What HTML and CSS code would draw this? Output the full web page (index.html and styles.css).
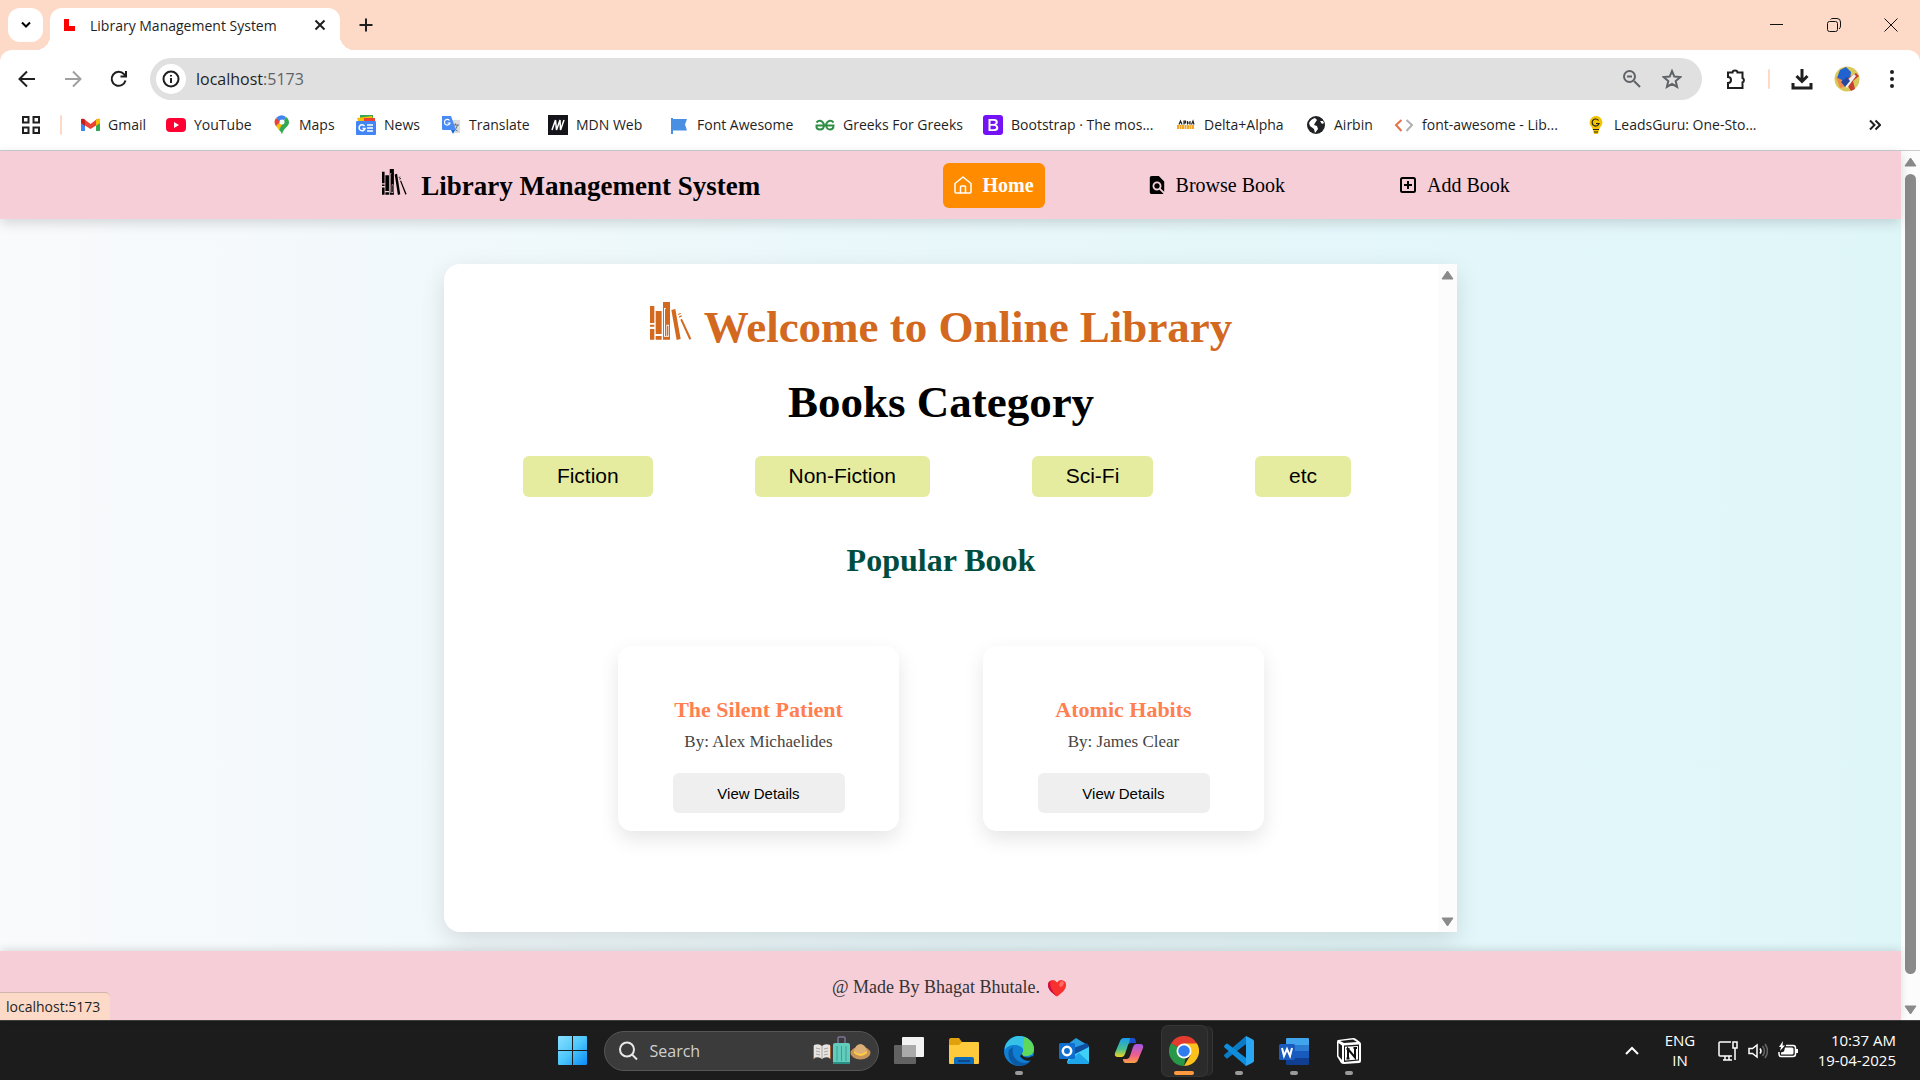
FILE: index.html
```html
<!DOCTYPE html>
<html lang="en">
<head>
<meta charset="utf-8">
<meta name="viewport" content="width=device-width, initial-scale=1">
<title>Library Management System</title>
<link rel="stylesheet" href="styles.css">
</head>
<body>
<svg class="defs" aria-hidden="true">
  <symbol id="books" viewBox="0 0 126 114">
    <path d="M0 12h13v51H0zM0 68h13v6H0zM0 81h13v32H0zM17 27h18v69H17zM17 102h18v11H17zM64 24l12-3 16 90-12 3zM84 36l8-3 1 2-8 4zM87 43l8-3 1 3-8 4zM91 53l5-3 28 60-6 3z"/>
    <path fill-rule="evenodd" d="M39 0h21v113H39zM42 18v86h15V68h-8v34h-4V20h3v-2zM51 71h4v30h-4z"/>
  </symbol>
</svg>

<header class="browser">
  <div class="tabstrip">
    <button class="tab-search" aria-label="Search tabs"><svg width="12" height="8" viewBox="0 0 12 8"><path d="M2 1.500l4 4 4-4" class="ln"/></svg></button>
    <div class="tab">
      <svg class="favicon" width="12" height="12" viewBox="0 0 12 12"><path d="M0 0h5v7h6v5H0z" fill="#f00"/></svg>
      <span class="tab-title">Library Management System</span>
      <button class="plain" aria-label="Close tab"><svg width="12" height="12" viewBox="0 0 12 12"><path d="M1.500 1.500l9 9M10.500 1.500l-9 9" class="ln"/></svg></button>
    </div>
    <button class="plain new-tab" aria-label="New tab"><svg width="14" height="14" viewBox="0 0 14 14"><path d="M7 .5v13M.5 7h13" class="ln"/></svg></button>
    <div class="window-controls">
      <button class="plain" aria-label="Minimize"><svg width="14" height="14" viewBox="0 0 14 14"><path d="M0 6.500h13" class="hair"/></svg></button>
      <button class="plain" aria-label="Restore"><svg width="14" height="14" viewBox="0 0 14 14"><rect x=".5" y="3.500" width="10" height="10" rx="2" class="hair"/><path d="M3.500 1.500Q4 .5 6 .5h4q3.500 0 3.500 3.500v4q0 2-1.500 3" class="hair"/></svg></button>
      <button class="plain" aria-label="Close window"><svg width="14" height="14" viewBox="0 0 14 14"><path d="M.5.5l13 13M13.500.5l-13 13" class="hair"/></svg></button>
    </div>
  </div>

  <div class="toolbar">
    <div class="nav-buttons">
      <button class="plain" aria-label="Back"><svg width="18" height="18" viewBox="0 0 18 18"><path d="M17 9H2M9 1.500L1.500 9 9 16.500" class="ln"/></svg></button>
      <button class="plain faded" aria-label="Forward"><svg width="18" height="18" viewBox="0 0 18 18"><path d="M1 9h15M9 1.500L16.500 9 9 16.500" class="ln"/></svg></button>
      <button class="plain" aria-label="Reload"><svg width="18" height="18" viewBox="0 0 18 18"><path d="M15.500 10.500A7 7 0 1 1 14 4.200l1.500 1.600M16 1v5.500h-5.500" class="ln"/></svg></button>
    </div>
    <div class="omnibox">
      <span class="site-info"><svg width="18" height="18" viewBox="0 0 18 18"><circle cx="9" cy="9" r="7.500" class="ln"/><path d="M9 8v5M9 5v1.500" class="ln"/></svg></span>
      <span class="address">localhost<span class="port">:5173</span></span>
      <svg class="muted" width="20" height="20" viewBox="0 0 20 20"><circle cx="7.500" cy="7.500" r="5.500" class="ln"/><path d="M12 12l6 6M5 7.500h5" class="ln"/></svg>
      <svg class="muted" width="20" height="20" viewBox="0 0 20 20"><path d="M10 2l2.300 5.600 6 .5-4.600 3.900 1.400 5.900L10 14.800l-5.100 3.100 1.400-5.900L1.700 8.100l6-.5z" class="ln"/></svg>
    </div>
    <div class="actions">
      <button class="plain" aria-label="Extensions"><svg width="22" height="22" viewBox="0 0 22 22"><path d="M3 4.500h4.500a2.500 2 0 0 1 5 0h5V10a2.500 2.500 0 0 1 0 4.500v5.500H3v-5a3 3 0 0 0 0-6z" class="ln"/></svg></button>
      <span class="divider"></span>
      <button class="plain" aria-label="Downloads"><svg width="22" height="22" viewBox="0 0 22 22"><path d="M11 1v12M5.500 8l5.500 5.500L16.500 8M2 15v5h18v-5" class="ln thick"/></svg></button>
      <button class="plain" aria-label="Profile"><svg width="26" height="26" viewBox="0 0 26 26"><circle cx="13" cy="13" r="12.500" fill="#d9c95c"/><path d="M6 4l6-3 5 5-1 8-8 4-5-6z" fill="#1f62d0"/><path d="M14 12l8-5 3 3-6 5 2 8-4 2-5-8z" fill="#c8402f"/><path d="M2 11l6 3 2 7-4 1z" fill="#f08a4b"/><path d="M9 18l11-10 2 2-9 12z" fill="#f4f1ee"/><path d="M7 16l6-5 3 4-5 6z" fill="#234a9e"/></svg></button>
      <button class="plain" aria-label="Menu"><svg width="6" height="18" viewBox="0 0 6 18"><g fill="#1f1f1f"><circle cx="3" cy="2" r="2"/><circle cx="3" cy="9" r="2"/><circle cx="3" cy="16" r="2"/></g></svg></button>
    </div>
  </div>

  <nav class="bookmarks" aria-label="Bookmarks">
    <button class="plain apps" aria-label="Apps"><svg width="18" height="18" viewBox="0 0 18 18"><path d="M1 1h5.500v5.500H1zM11.500 1H17v5.500h-5.500zM1 11.500h5.500V17H1zM11.500 11.500H17V17h-5.500z" class="ln"/></svg></button>
    <span class="divider"></span>
    <a href="#"><svg width="19" height="20" viewBox="0 0 19 20"><path d="M0 5v11h4V8z" fill="#4285f4"/><path d="M19 5v11h-4V8z" fill="#34a853"/><path d="M0 5q0-2 3-1l6.500 5L16 4q3-1 3 1v3l-9.500 6L0 8z" fill="#ea4335"/><path d="M15 5l1-1q3-1 3 1v3l-4 3z" fill="#fbbc04"/><path d="M0 5q0-2 3-1l1 1v6L0 8z" fill="#c5221f"/></svg>Gmail</a>
    <a href="#"><svg width="20" height="20" viewBox="0 0 20 20"><rect y="3" width="20" height="14" rx="4" fill="#ff0033"/><path d="M8 7l5 3-5 3z" fill="#fff"/></svg>YouTube</a>
    <a href="#"><svg width="18" height="20" viewBox="0 0 18 20"><path d="M2 7q0 3 2 5l9-9a7 7 0 0 0-11 4" fill="#4285f4"/><path d="M3 3l4 4-4 4q-3-4 0-8" fill="#ea4335"/><path d="M3 11l4-4 3 3-4 5z" fill="#fbbc04"/><path d="M13 2q3 2 3 5.500c0 4-6 6-7 12-.5-2-1.500-3-3-4.500z" fill="#34a853"/><path d="M3 3q5-5 10-1L9 6z" fill="#4285f4"/><circle cx="9" cy="7" r="2.500" fill="#fff"/></svg>Maps</a>
    <a href="#"><svg width="20" height="20" viewBox="0 0 20 20"><path d="M4 0h13v6H4z" fill="#34a853"/><path d="M1 3l15-2 1 5H2z" fill="#fbbc04"/><path d="M8 3h11v5H8z" fill="#ea4335"/><rect y="6" width="20" height="14" rx="1" fill="#4285f4"/><path d="M8.500 11a3 3 0 1 0 .5 2.500H6.500M11 10h6M11 13h6M11 16h6" fill="none" stroke="#fff" stroke-width="1.500"/></svg>News</a>
    <a href="#"><svg width="20" height="20" viewBox="0 0 20 20"><path d="M8 5h11v13H12z" fill="#dadce0"/><path d="M11 10h7M14.500 8.500V10m2 0q-1 4-4 6m0-4q1 3 4 4" stroke="#5f6f80" fill="none"/><path d="M1 1h9l5 14H2q-1 0-1-1z" fill="#4a8af4"/><path d="M10 15h4l-2 4z" fill="#1967d2"/><path d="M8.500 5.500a2.800 2.800 0 1 0 .5 2.500H6.500" fill="none" stroke="#fff" stroke-width="1.200"/></svg>Translate</a>
    <a href="#"><svg width="20" height="20" viewBox="0 0 20 20"><path d="M0 0h20v20H0z" fill="#15141a"/><path d="M4 15L7.500 5M7.500 5l1 10L12 5l.5 10L16 5" fill="none" stroke="#fff" stroke-width="1.500"/></svg>MDN Web</a>
    <a href="#"><svg width="20" height="20" viewBox="0 0 20 20"><path d="M2 3h2v16H2zM4 4h14l-2 5.500 2 6H4z" fill="#4a90e2"/></svg>Font Awesome</a>
    <a href="#"><svg width="20" height="20" viewBox="0 0 20 20"><path d="M1.500 7.500Q4 4.500 7 6.500 9 8.500 9 10q0 4.500-4 4.500T1.500 10.500h17q0 4-3.500 4t-4-4.500q0-1.500 2-3.500 3-2 5.500 1" fill="none" stroke="#2f8d46" stroke-width="2"/></svg>Greeks For Greeks</a>
    <a href="#"><svg width="20" height="20" viewBox="0 0 20 20"><rect width="20" height="20" rx="3" fill="#7411f5"/><path fill-rule="evenodd" d="M5.500 4H11q3.800 0 3.800 3.200 0 2-1.800 2.600 2.300.6 2.300 2.900Q15.300 16 11.300 16H5.500zM7.500 5.700V9h3q2.200 0 2.200-1.700T10.700 5.700zM7.500 10.700v3.600h3.300q2.400 0 2.400-1.800t-2.400-1.800z" fill="#fff"/></svg>Bootstrap · The mos...</a>
    <a href="#"><svg width="20" height="20" viewBox="0 0 20 20"><path d="M3 9.500l1.500-3.500L6 9.500M8 9.500V6h1.500v2H8M11.500 9.500V6M11.500 8H14M14 9.500V6M15.500 9.500L17 6l1 3.500" fill="none" stroke="#222" stroke-width="1.200"/><path d="M1 12h17" stroke="#f5a623" stroke-width="4" stroke-dasharray="2 .500"/></svg>Delta+Alpha</a>
    <a href="#"><svg width="20" height="20" viewBox="0 0 20 20"><circle cx="10" cy="10" r="9" fill="#202124"/><path d="M3 8q2-4 6-5l2 2-2 3-1 2 3 1 1 3-3 4-1-4-4-3zM14 6l2 3 2-1-1-2z" fill="#fff"/></svg>Airbin</a>
    <a href="#"><svg width="20" height="20" viewBox="0 0 20 20" fill="none" stroke-width="2"><path d="M7.500 5L2 10l5.500 6" stroke="#e8704a"/><path d="M12.500 5l5.500 5-5.500 6" stroke="#b0b0b0"/></svg>font-awesome - Lib...</a>
    <a href="#"><svg width="20" height="20" viewBox="0 0 20 20"><path d="M10 1a6.500 6.500 0 0 1 4 11.500L12 19H8l-2-6.500A6.500 6.500 0 0 1 10 1" fill="#f5c400"/><path d="M12.500 5.500a3.500 3.500 0 1 0 .5 3h-3M7 14.500h6M8 17h4" fill="none" stroke="#222" stroke-width="1.200"/></svg>LeadsGuru: One-Sto...</a>
    <button class="plain more" aria-label="More bookmarks"><svg width="12" height="12" viewBox="0 0 12 12"><path d="M1 1.500L5.500 6 1 10.500M6.500 1.500L11 6l-4.500 4.500" class="ln"/></svg></button>
  </nav>
</header>

<div class="viewport">
  <div class="site">
    <header class="site-header">
      <div class="site-bar">
        <div class="brand"><svg class="brand-icon" width="25" height="26" viewBox="0 0 126 114" preserveAspectRatio="none"><use href="#books"/></svg>Library Management System</div>
        <nav class="menu">
          <a class="menu-item active" href="#"><svg width="18" height="18" viewBox="0 0 18 18" fill="none" stroke="currentColor" stroke-width="1.500" stroke-linejoin="round"><path d="M1 7.500L9 1l8 6.500v8.500q0 1-1 1H2q-1 0-1-1z"/><path d="M6.500 17v-6q0-1 1-1h3q1 0 1 1v6"/></svg>Home</a>
          <a class="menu-item" href="#"><svg width="18" height="18" viewBox="2 2 20 20" fill="currentColor"><path d="M20 19.590V8l-6-6H6c-1.100 0-1.990.9-1.990 2L4 20c0 1.100.89 2 1.990 2H18c.45 0 .85-.15 1.190-.4l-4.430-4.430c-.8.520-1.740.83-2.760.83-2.760 0-5-2.240-5-5s2.240-5 5-5 5 2.240 5 5c0 1.020-.31 1.960-.83 2.750L20 19.590zM9 13c0 1.660 1.340 3 3 3s3-1.340 3-3-1.340-3-3-3-3 1.340-3 3z"/></svg>Browse Book</a>
          <a class="menu-item" href="#"><svg width="18" height="18" viewBox="0 0 18 18" fill="none" stroke="currentColor" stroke-width="2"><rect x="2" y="2" width="14" height="14" rx="1.500"/><path d="M9 5v8M5 9h8"/></svg>Add Book</a>
        </nav>
      </div>
    </header>

    <main class="stage">
      <div class="panel">
        <div class="panel-body">
          <h1 class="welcome"><svg class="welcome-icon" width="42" height="38" viewBox="0 0 126 114"><use href="#books"/></svg>Welcome to Online Library</h1>
          <h2 class="category-title">Books Category</h2>
          <div class="categories">
            <button class="category">Fiction</button>
            <button class="category">Non-Fiction</button>
            <button class="category">Sci-Fi</button>
            <button class="category">etc</button>
          </div>
          <h2 class="popular-title">Popular Book</h2>
          <div class="books">
            <article class="book">
              <h3 class="book-title">The Silent Patient</h3>
              <p class="author">By: Alex Michaelides</p>
              <button class="details">View Details</button>
            </article>
            <article class="book">
              <h3 class="book-title">Atomic Habits</h3>
              <p class="author">By: James Clear</p>
              <button class="details">View Details</button>
            </article>
          </div>
        </div>
        <div class="scrollbar" aria-hidden="true">
          <svg width="13" height="10" viewBox="0 0 13 10"><path d="M6.500 1L12 9H1z" class="arrow"/></svg>
          <span class="track"></span>
          <svg width="13" height="10" viewBox="0 0 13 10"><path d="M6.500 9L12 1H1z" class="arrow"/></svg>
        </div>
      </div>
    </main>

    <footer class="site-footer">@ Made By Bhagat Bhutale.
      <svg width="20" height="18" viewBox="0 0 20 18"><path d="M10 17.500C5 14 1 10.500 1 6a4.800 4.800 0 0 1 9-2.500A4.800 4.800 0 0 1 19 6c0 4.500-4 8-9 11.500" fill="#f8312f"/><path d="M10 17.500C5 14 1 10.500 1 6q0-3 2.500-4.500C2 8 6 13 10 17.500" fill="#ca0b4a"/><ellipse cx="14.500" cy="5" rx="2" ry="3" transform="rotate(30 14.500 5)" fill="#ff6b63"/></svg>
    </footer>
    <div class="status">localhost:5173</div>
  </div>
  <div class="scrollbar page-scroll" aria-hidden="true">
    <svg width="13" height="10" viewBox="0 0 13 10"><path d="M6.500 1L12 9H1z" class="arrow"/></svg>
    <span class="track thumb"></span>
    <svg width="13" height="10" viewBox="0 0 13 10"><path d="M6.500 9L12 1H1z" class="arrow"/></svg>
  </div>
</div>

<footer class="taskbar">
  <div></div>
  <div class="dock">
    <button class="app" aria-label="Start"><svg width="30" height="30" viewBox="0 0 30 30"><defs><linearGradient id="win" x2="1" y2="1"><stop stop-color="#8be0ff"/><stop offset=".5" stop-color="#4cc6fc"/><stop offset="1" stop-color="#0a8cf5"/></linearGradient></defs><path d="M0 1q0-1 1-1h13v14H0zM15 0h13q1 0 1 1v13H15zM0 15h14v14H1q-1 0-1-1zM15 15h14v13q0 1-1 1H15z" fill="url(#win)"/></svg></button>
    <label class="search">
      <svg width="20" height="20" viewBox="0 0 20 20"><circle cx="9" cy="8.500" r="7" fill="none" stroke="#e8e8e8" stroke-width="2"/><path d="M14 13.500l5 5" stroke="#e8e8e8" stroke-width="2"/></svg>
      <input class="search-input" type="text" placeholder="Search" aria-label="Search">
      <svg width="58" height="30" viewBox="0 0 58 30"><path d="M0 10l2-1v14H0zM18 10l-2-1v14h2z" fill="#a5673a"/><path d="M1 9q5-2 8 1 3-3 8-1v13q-5-2-8 1-3-3-8-1z" fill="#e6e3e0"/><path d="M9 10v13M3 12l4 1M3 15l4 1M3 18l4 1M15 12l-4 1M15 15l-4 1M15 18l-4 1" stroke="#a8a4a0"/><path d="M25 7V2q0-1 1-1h5q1 0 1 1v5" fill="none" stroke="#7d7494" stroke-width="1.500"/><rect x="20" y="7" width="17" height="21" rx="2" fill="#62cdbd"/><path d="M24 10v15M28.500 10v15M33 10v15" stroke="#3a9f94"/><path d="M20 26h17v2H20z" fill="#2c8f85"/><ellipse cx="47.500" cy="17" rx="10" ry="6.500" fill="#c6945a"/><path d="M41 16q1-8 7-8 5 1 6 8-6 5-13 0" fill="#dcae78"/><path d="M41 15q6 6 13 0v2q-6 6-13 0z" fill="#ffcf3f"/></svg>
    </label>
    <div class="apps-row">
      <button class="app" aria-label="Task view"><svg width="30" height="28" viewBox="0 0 30 28"><rect x="8" width="22" height="20" rx="1" fill="#f3f3f3"/><rect y="8" width="22" height="19" rx="1" fill="#626262"/><path d="M8 8h14v12H8z" fill="#ababab"/></svg></button>
      <button class="app" aria-label="File Explorer"><svg width="30" height="28" viewBox="0 0 30 28"><path d="M0 3q0-2 2-2h8l3 4v4H0z" fill="#e0a10c"/><path d="M0 8h10l3-3h16q1 0 1 1v20q0 1-1 1H1q-1 0-1-1z" fill="#ffcb3d"/><path d="M5 27v-5q0-2 2-2h16q2 0 2 2v5z" fill="#0f6cbd"/><path d="M9 24h12" stroke="#0b3f75" stroke-width="1.500"/></svg></button>
      <button class="app running" aria-label="Edge"><svg width="30" height="30" viewBox="0 0 30 30"><circle cx="15" cy="15" r="15" fill="#0f7fd4"/><path d="M1 11C3 4 9 0 15 0c9 0 15 6 15 13 0 5-4 7-8 7-3 0-4-1-4-2 0-1 2-2 1-5-1-2-4-4-8-4-5 0-9 2-10 5z" fill="#35c1e8"/><path d="M20 1c6 2 10 7 10 12 0 5-4 7-8 7-3 0-4-1-4-2 0-1 2-2 1-5z" fill="#5fd95c"/><path d="M9 11c-2 8 3 16 12 16q4 0 7-5-3 8-13 8C6 29 3 20 5 14z" fill="#0c59a4"/><path d="M18 18c0 3 5 5 10 2l3 1-2 3c-5 2-11 0-13-4z" fill="#1c1c1c"/></svg></button>
      <button class="app" aria-label="Outlook"><svg width="30" height="28" viewBox="0 0 30 28"><path d="M5 10L17 1l13 8v6H5z" fill="#2a9de0"/><path d="M12 12l16-6 2 4-14 10H8z" fill="#0f4ea0"/><path d="M10 20l20-10v15q0 2-2 2H10q-2 0-2-2z" fill="#3fd0f7"/><path d="M8 25l12-9 10 9q0 2-2 2H10z" fill="#1fa5ea"/><rect y="6" width="16" height="16" rx="1.500" fill="#0f6fd0"/><circle cx="8" cy="14" r="4.200" fill="none" stroke="#fff" stroke-width="2.500"/></svg></button>
      <button class="app" aria-label="Copilot"><svg width="30" height="28" viewBox="0 0 30 28"><defs><linearGradient id="cp1" x2="0" y2="1"><stop stop-color="#159df0"/><stop offset=".6" stop-color="#4cc08a"/><stop offset="1" stop-color="#f2d321"/></linearGradient><linearGradient id="cp2" x2="0" y2="1"><stop stop-color="#a257e8"/><stop offset=".6" stop-color="#f0608a"/><stop offset="1" stop-color="#fba042"/></linearGradient></defs><path d="M6 4q1-3 4-3h8q3 0 3 4h-4q-2 0-3 3l-3 9q-1 3-3 3H4q-4 0-3-4z" fill="url(#cp1)"/><path d="M24 23q-1 3-4 3h-8q-3 0-3-4h4q2 0 3-3l3-9q1-3 3-3h4q4 0 3 4z" fill="url(#cp2)"/><path d="M16 1h3q3 0 3 5h-5q-2 0-2 2z" fill="#1b4fd0"/></svg></button>
      <button class="app current" aria-label="Chrome"><svg width="30" height="30" viewBox="0 0 30 30"><path d="M15 15L2 7.500a15 15 0 0 1 26 0z" fill="#e33b2e"/><path d="M15 15L2 7.500A15 15 0 0 0 15 30z" fill="#279847"/><path d="M15 15L28 7.500A15 15 0 0 1 15 30l6.500-11z" fill="#fcc21b"/><path d="M2 7.500L8.500 18.500 15 15z" fill="#279847"/><path d="M8.500 18.500q3 4.500 8 3.500L15 30z" fill="#279847"/><path d="M15 7.500h13L21 15z" fill="#fcc21b"/><circle cx="15" cy="15" r="7.500" fill="#fff"/><circle cx="15" cy="15" r="5.800" fill="#2f7cee"/></svg></button>
      <button class="app running" aria-label="Visual Studio Code"><svg width="30" height="30" viewBox="0 0 30 30"><path d="M22 0v8L4 22q-1 1-2 0l-1.500-1.500q-1-1 0-2z" fill="#0a7bc4"/><path d="M22 30v-8L4 8Q3 7 2 8L.5 9.500q-1 1 0 2z" fill="#0f8ddb"/><path d="M22 0l6 3q2 1 2 2v20q0 1-2 2l-6 3z" fill="#2aa7f2"/></svg></button>
      <button class="app running" aria-label="Word"><svg width="30" height="28" viewBox="0 0 30 28"><path d="M7 2q0-1 1-1h21q1 0 1 1v6H7z" fill="#41a5ee"/><path d="M7 8h23v6H7z" fill="#2b7cd3"/><path d="M7 14h23v7H7z" fill="#185abd"/><path d="M7 21h23v6q0 1-1 1H8q-1 0-1-1z" fill="#103f91"/><rect y="7" width="16" height="16" rx="1.500" fill="#185abd"/><path d="M3 11l2 8 3-7 3 7 2-8" fill="none" stroke="#fff" stroke-width="2"/></svg></button>
      <button class="app running" aria-label="Notion"><svg width="26" height="28" viewBox="0 0 26 28"><path d="M2 3l15-2q2 0 3 1l4 3q1 1 1 2v17q0 2-2 2l-15 1q-2 0-3-1l-3-5q-1-1-1-2V5q0-2 1-2" fill="#fff"/><path d="M4 4l13-1.500 4 2.500L8 6zM2.500 6L6 8.500V23l-3.500-4zM8 8.500L23 7.500v16L8 25z" fill="#1c1c1c"/><path d="M9 9.800l13-.8v13.500L9 23.500z" fill="#fff"/><path d="M12 21v-9l7 8.500V11M10.500 12h3M17.500 11h3.500M10.500 21.500h3" fill="none" stroke="#111" stroke-width="2"/></svg></button>
    </div>
  </div>
  <div class="tray">
    <svg width="14" height="9" viewBox="0 0 14 9"><path d="M1 8l6-6 6 6" fill="none" stroke="#fff" stroke-width="2"/></svg>
    <div class="lang">ENG<br>IN</div>
    <div class="tray-icons">
      <svg width="20" height="20" viewBox="0 0 20 20" fill="none" stroke="#fff" stroke-width="1.500"><path d="M13 1H2q-1 0-1 1v12q0 1 1 1h12M5 19h9M7 15v4M11 15v4M15 1h4v6h-4zM17 7v12"/></svg>
      <svg width="20" height="20" viewBox="0 0 20 20" fill="none" stroke="#fff" stroke-width="1.500"><path d="M1 7.500h3.500L9 4v12l-4.500-3.500H1z"/><path d="M12 7.500q2 2.500 0 5" /><path d="M14.500 5q4 5 0 10M17 3q5 7 0 14" stroke="#666"/></svg>
      <svg width="20" height="20" viewBox="0 0 20 20"><path d="M8 4.500h7q2.500 0 2.500 2.500v6q0 2.500-2.500 2.500H3Q1 15.500 1 13v-2" fill="none" stroke="#fff" stroke-width="1.500"/><path d="M7 6.500h7q1.500 0 1.500 1.500v4q0 1.500-1.500 1.500H3v-2l3-1zM18 8h2v4h-2zM5 0L1 6h2L2 10l5-5.500H4.500z" fill="#fff"/></svg>
    </div>
    <div class="clock">10:37 AM<br>19-04-2025</div>
  </div>
</footer>
</body>
</html>
```

FILE: styles.css
```css
* { box-sizing: border-box; }

body {
  margin: 0;
  min-height: 100vh;
  display: flex;
  flex-direction: column;
  font-family: "Open Sans", "Noto Sans", sans-serif;
  color: #1f1f1f;
}

h1, h2, h3, p { margin: 0; }
a { color: inherit; text-decoration: none; }
svg { display: block; flex: none; }
.defs { position: absolute; width: 0; height: 0; }

.plain {
  border: 0;
  padding: 0;
  background: none;
  display: flex;
  align-items: center;
  justify-content: center;
  color: inherit;
}
.ln { fill: none; stroke: currentColor; stroke-width: 2; }
.thick { stroke-width: 3; }
.hair { fill: none; stroke: #111; stroke-width: 1; }
.faded { color: #a0a0a0; }
.muted { color: #5f6368; }

/* Browser frame */
.browser {
  background: #fddac8;
  border-bottom: 1px solid #c8cccc;
}
.tabstrip {
  display: flex;
  align-items: center;
  height: 50px;
  padding: 0 22px 0 8px;
}
.tab-search {
  width: 35px;
  height: 34px;
  border: 0;
  border-radius: 12px;
  background: #fff;
  display: flex;
  align-items: center;
  justify-content: center;
}
.tab {
  position: relative;
  align-self: flex-end;
  width: 290px;
  height: 42px;
  margin-left: 7px;
  padding: 0 14px 8px;
  border-radius: 12px 12px 0 0;
  background: #fff;
  display: flex;
  align-items: center;
}
.tab::before,
.tab::after {
  content: "";
  position: absolute;
  bottom: 0;
  width: 14px;
  height: 14px;
}
.tab::before { right: 100%; background: radial-gradient(circle at 0 0, transparent 14px, #fff 14px); }
.tab::after { left: 100%; background: radial-gradient(circle at 100% 0, transparent 14px, #fff 14px); }
.tab-title { flex: 1; margin-left: 14px; font-size: 14px; }
.new-tab { margin-left: 19px; }
.window-controls { margin-left: auto; display: flex; gap: 43px; }

.toolbar {
  display: flex;
  align-items: center;
  padding: 8px 25px 0 18px;
  border-radius: 12px 12px 0 0;
  background: #fff;
}
.nav-buttons { display: flex; gap: 28px; width: 132px; }
.omnibox {
  flex: 1;
  display: flex;
  align-items: center;
  gap: 20px;
  height: 42px;
  padding: 0 20px 0 6px;
  border-radius: 21px;
  background: #e0e0e0;
}
.site-info {
  width: 30px;
  height: 30px;
  margin-right: -10px;
  border-radius: 50%;
  background: #fff;
  display: flex;
  align-items: center;
  justify-content: center;
}
.address { flex: 1; font-size: 16px; }
.port { color: #5f6368; }
.actions { display: flex; align-items: center; gap: 21px; margin-left: 23px; }
.divider { width: 2px; height: 20px; border-radius: 1px; background: #fddac8; }
.actions .plain:last-child { margin-left: 8px; }

.bookmarks {
  display: grid;
  grid-template-columns: 38px 21px 85px 107px 83px 85px 107px 121px 146px 168px 193px 130px 88px 192px 180px 1fr;
  align-items: center;
  height: 50px;
  padding: 0 39px 0 22px;
  background: #fff;
  font-size: 14px;
  line-height: 18px;
}
.bookmarks a { display: flex; align-items: center; gap: 8px; white-space: nowrap; }
.apps { justify-self: start; }
.more { justify-self: end; }

/* Page */
.viewport { flex: 1; display: flex; font-family: "Liberation Serif", "Times New Roman", serif; }
.site {
  position: relative;
  flex: 1;
  display: flex;
  flex-direction: column;
  background: linear-gradient(to right, #f9fafc, #e8f7fa 50%, #dff6f9);
}
.site-header {
  position: relative;
  background: #f6ced8;
  box-shadow: 0 4px 12px rgba(0, 0, 0, 0.150);
}
.site-bar {
  width: 60%;
  height: 68px;
  margin: 0 auto;
  padding-left: 2px;
  display: flex;
  align-items: center;
  justify-content: space-between;
  color: #000;
}
.brand { display: flex; align-items: center; gap: 14px; padding-top: 2px; font-size: 27px; font-weight: bold; }
.brand-icon { margin-bottom: 8px; }
.menu { display: flex; gap: 92px; }
.menu-item {
  display: flex;
  align-items: center;
  gap: 10px;
  height: 45px;
  padding: 0 11px;
  border-radius: 6px;
  font-size: 20px;
}
.active { background: #ff8c00; color: #fff; font-weight: bold; }

.stage { flex: 1; display: flex; justify-content: center; padding: 45px 24px 19px; }
.panel {
  width: 100%;
  max-width: 1013px;
  display: flex;
  border-radius: 16px 0 0 16px;
  background: #fff;
  box-shadow: 0 8px 24px rgba(0, 0, 0, 0.120);
}
.panel-body { flex: 1; padding: 37px 28px 24px; }
.welcome {
  display: flex;
  align-items: center;
  justify-content: center;
  gap: 12px;
  font-size: 45px;
  line-height: 52px;
  color: #d2691e;
}
.welcome-icon, .brand-icon { fill: currentColor; }
.welcome-icon { margin-bottom: 12px; }
.category-title { margin-top: 23px; font-size: 45px; line-height: 52px; text-align: center; color: #000; }
.categories { display: flex; justify-content: space-around; margin-top: 28px; padding-right: 8px; }
.category {
  height: 41px;
  padding: 0 34px 2px;
  border: 0;
  border-radius: 6px;
  background: #e6ec9f;
  font: 21px "Liberation Sans", Arial, sans-serif;
  color: #000;
}
.popular-title { margin-top: 45px; font-size: 32px; line-height: 36px; text-align: center; color: #004d40; }
.books { display: flex; justify-content: center; gap: 84px; margin-top: 68px; }
.book {
  width: 281px;
  padding: 51px 20px 18px;
  border-radius: 14px;
  box-shadow: 0 8px 20px rgba(0, 0, 0, 0.100);
  text-align: center;
}
.book-title { font-size: 22px; line-height: 26px; color: #ff7f50; }
.author { margin: 9px 0 21px; font-size: 17px; line-height: 20px; color: #444; }
.details {
  width: 172px;
  height: 40px;
  border: 0;
  border-radius: 6px;
  background: #efefef;
  font: 15px "Liberation Sans", Arial, sans-serif;
  color: #000;
  vertical-align: top;
}
.site-footer {
  display: flex;
  align-items: center;
  justify-content: center;
  gap: 7px;
  height: 69px;
  padding: 4px 2px 0 0;
  background: #f6ced8;
  box-shadow: 0 -2px 8px rgba(0, 0, 0, 0.120);
  font-size: 18px;
  color: #333;
}
.status {
  position: absolute;
  left: 0;
  bottom: 0;
  height: 28px;
  padding: 0 10px 0 6px;
  border-top: 1px solid #d0b4ae;
  border-radius: 0 5px 0 0;
  background: #fddac8;
  font: 14px/27px "Open Sans", sans-serif;
  color: #1f1f1f;
}
.scrollbar {
  width: 19px;
  padding: 6px 0 5px;
  background: #fcfcfc;
  display: flex;
  flex-direction: column;
  align-items: center;
}
.arrow { fill: #8a8a8a; stroke: #8a8a8a; stroke-width: 1; stroke-linejoin: round; }
.track { flex: 1; }
.thumb { width: 11px; margin: 7px 0 31px; border-radius: 6px; background: #8a8a8a; }

/* Taskbar */
.taskbar {
  display: grid;
  grid-template-columns: 1fr auto 1fr;
  align-items: center;
  height: 60px;
  border-top: 1px solid #404040;
  background: #1c1c1c;
  color: #fff;
}
.dock { display: flex; align-items: center; gap: 8px; padding-left: 2px; }
.apps-row { display: flex; gap: 10px; }
.app {
  position: relative;
  width: 45px;
  height: 50px;
  padding: 0;
  border: 0;
  border-radius: 6px;
  background: none;
  display: flex;
  align-items: center;
  justify-content: center;
}
.running::after,
.current::after {
  content: "";
  position: absolute;
  bottom: 1px;
  width: 8px;
  height: 4px;
  border-radius: 2px;
  background: #9a9a9a;
}
.current { background: #2b2b2b; box-shadow: 0 0 0 1px #363636, 5px 0 0 0 #262626, 6px 0 0 0 #363636; }
.current::after { width: 20px; background: #ff9a3e; }
.search {
  display: flex;
  align-items: center;
  gap: 12px;
  width: 275px;
  height: 40px;
  padding: 0 7px 0 13px;
  border: 1px solid #565656;
  border-radius: 20px;
  background: #3b3b3b;
}
.search-input {
  flex: 1;
  min-width: 0;
  padding: 0;
  border: 0;
  background: none;
  font: 16px "Open Sans", sans-serif;
}
.search-input::placeholder { color: #d0d0d0; opacity: 1; }
.tray {
  display: flex;
  align-items: center;
  justify-content: flex-end;
  padding-right: 24px;
  font-size: 15px;
  line-height: 20px;
}
.lang { width: 50px; margin: 0 13px 0 16px; padding-bottom: 2px; text-align: center; }
.tray-icons { display: flex; gap: 10px; }
.clock { width: 98px; padding-bottom: 2px; text-align: right; }
```
